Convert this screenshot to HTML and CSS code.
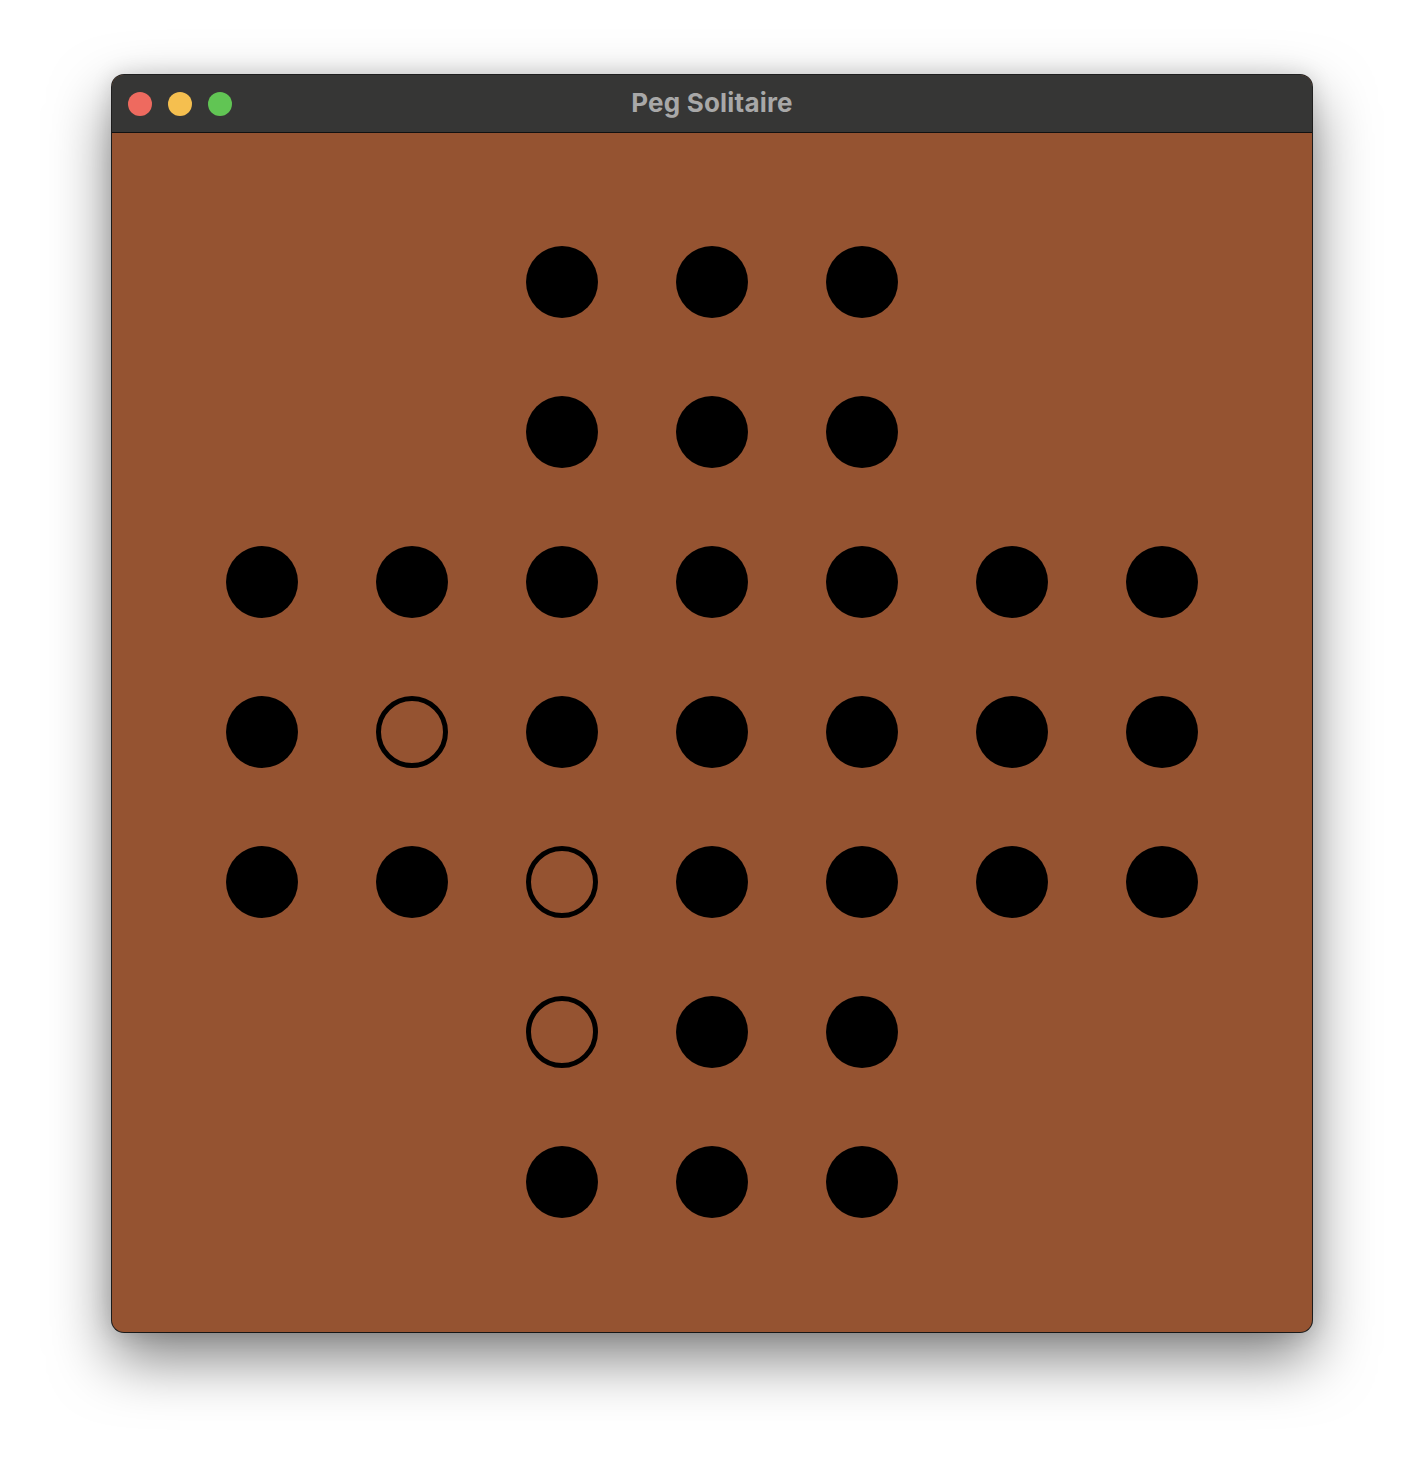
FILE: index.html
```html
<!DOCTYPE html>
<html>
<head>
<meta charset="utf-8">
<title>Peg Solitaire</title>
<link rel="stylesheet" href="styles.css">
</head>
<body>
<div class="window">
  <div class="titlebar">
    <div class="lights">
      <span class="light red"></span>
      <span class="light yellow"></span>
      <span class="light green"></span>
    </div>
    <div class="title">Peg Solitaire</div>
  </div>
  <div class="board">
    <span class="cell"></span><span class="cell"></span><span class="cell peg"></span><span class="cell peg"></span><span class="cell peg"></span><span class="cell"></span><span class="cell"></span>
    <span class="cell"></span><span class="cell"></span><span class="cell peg"></span><span class="cell peg"></span><span class="cell peg"></span><span class="cell"></span><span class="cell"></span>
    <span class="cell peg"></span><span class="cell peg"></span><span class="cell peg"></span><span class="cell peg"></span><span class="cell peg"></span><span class="cell peg"></span><span class="cell peg"></span>
    <span class="cell peg"></span><span class="cell hole"></span><span class="cell peg"></span><span class="cell peg"></span><span class="cell peg"></span><span class="cell peg"></span><span class="cell peg"></span>
    <span class="cell peg"></span><span class="cell peg"></span><span class="cell hole"></span><span class="cell peg"></span><span class="cell peg"></span><span class="cell peg"></span><span class="cell peg"></span>
    <span class="cell"></span><span class="cell"></span><span class="cell hole"></span><span class="cell peg"></span><span class="cell peg"></span><span class="cell"></span><span class="cell"></span>
    <span class="cell"></span><span class="cell"></span><span class="cell peg"></span><span class="cell peg"></span><span class="cell peg"></span><span class="cell"></span><span class="cell"></span>
  </div>
</div>
</body>
</html>
```
FILE: styles.css
```css
html, body {
  margin: 0;
  padding: 0;
  background: #ffffff;
}
body {
  width: 1424px;
  height: 1480px;
  display: flex;
  justify-content: center;
  align-items: flex-start;
  padding-top: 75px;
  box-sizing: border-box;
  font-family: Inter, "Open Sans", "Liberation Sans", sans-serif;
}
.window {
  width: 1200px;
  border-radius: 12px;
  overflow: hidden;
  background: #955331;
  box-shadow: 0 0 0 1px rgba(0,0,0,0.85), 0 26px 60px rgba(0,0,0,0.5), 0 0 22px rgba(0,0,0,0.14);
}
.titlebar {
  height: 57px;
  background: #363635;
  border-bottom: 1px solid #111;
  display: flex;
  align-items: center;
  position: relative;
}
.lights {
  display: flex;
  gap: 16px;
  padding-left: 16px;
}
.light {
  width: 24px;
  height: 24px;
  border-radius: 50%;
  display: block;
}
.red { background: #ee6a5f; }
.yellow { background: #f5bf4f; }
.green { background: #61c554; }
.title {
  position: absolute;
  left: 0;
  right: 0;
  top: 0;
  line-height: 56px;
  text-align: center;
  color: #a8a8a8;
  font-weight: 700;
  font-size: 26px;
  letter-spacing: 0.2px;
}
.board {
  display: grid;
  grid-template-columns: repeat(7, 150px);
  grid-template-rows: repeat(7, 150px);
  padding: 74px 75px 75px 75px;
}
.cell {
  display: flex;
  align-items: center;
  justify-content: center;
}
.peg::before, .hole::before {
  content: "";
  display: block;
  width: 72px;
  height: 72px;
  border-radius: 50%;
  box-sizing: border-box;
}
.peg::before {
  background: #000;
}
.hole::before {
  border: 5px solid #000;
}
```
